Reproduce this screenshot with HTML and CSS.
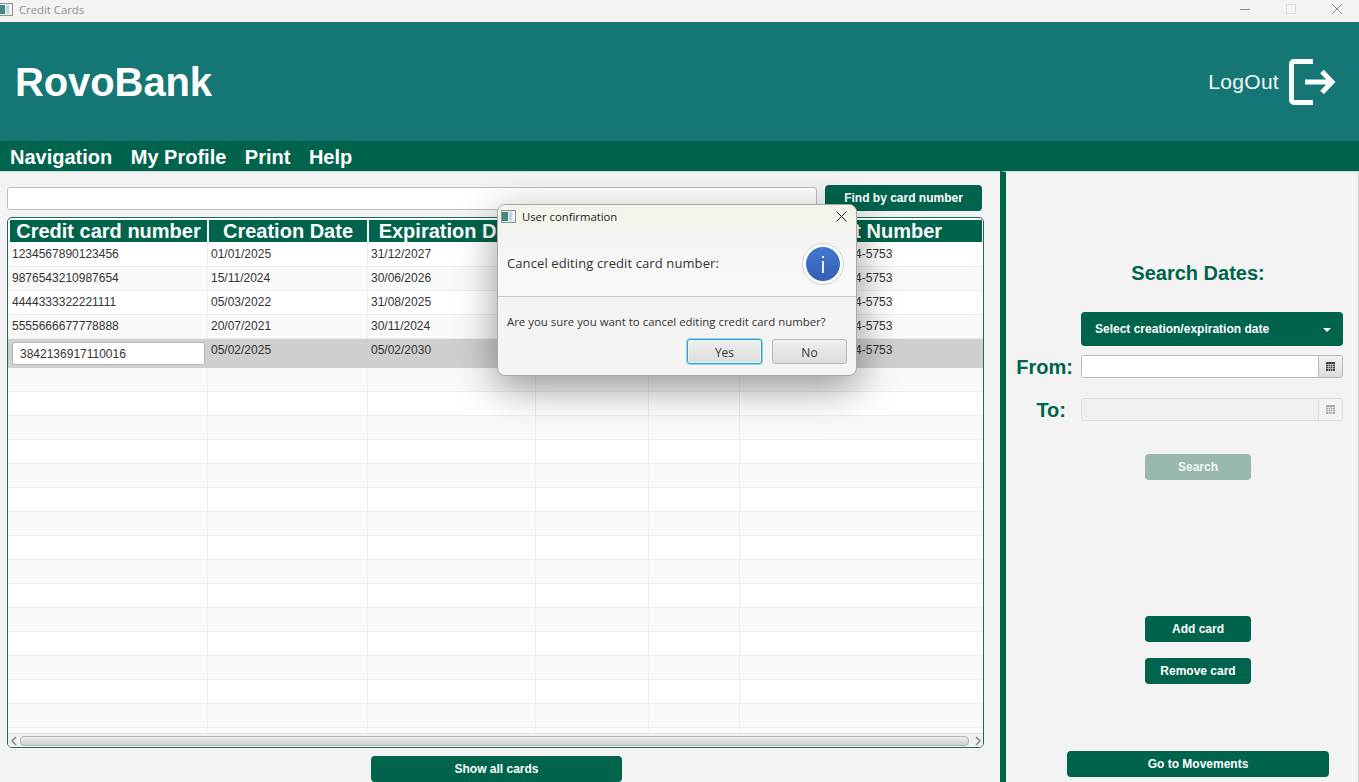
FILE: index.html
```html
<!DOCTYPE html>
<html lang="en">
<head>
<meta charset="utf-8">
<title>Credit Cards</title>
<link rel="stylesheet" href="styles.css">
</head>
<body>
<div class="app">
  <div class="titlebar">
    <div class="title-left">
      <svg class="winicon" viewBox="0 0 15 13"><rect x=".5" y=".5" width="14" height="12" fill="#e8eef0" stroke="#8a9499"/><rect x="1" y="2" width="6" height="9" fill="#3f8a80"/><rect x="8" y="2" width="3" height="9" fill="#c5d6dc"/><rect x="12" y="2" width="2" height="9" fill="#f4f4f4"/></svg>
      <span>Credit Cards</span>
    </div>
    <div class="win-controls">
      <svg viewBox="0 0 12 12"><path d="M1 6.500h10" stroke="#8c8c8c" fill="none"/></svg>
      <svg viewBox="0 0 12 12"><rect x="1.500" y="1.500" width="9" height="9" stroke="#dedede" fill="none"/></svg>
      <svg viewBox="0 0 12 12"><path d="M1 1l10 10M11 1L1 11" stroke="#8c8c8c" fill="none"/></svg>
    </div>
  </div>
  <header class="banner">
    <div class="brand">RovoBank</div>
    <div class="logout">
      <span>LogOut</span>
      <svg class="logout-icon" viewBox="0 0 48 46" width="48" height="46"><path d="M24 2.500H5a2.500 2.500 0 0 0-2.500 2.500v36a2.500 2.500 0 0 0 2.500 2.500h19" fill="none" stroke="#fff" stroke-width="5"/><path d="M16 23h27M33 12.500L43 23 33 33.500" fill="none" stroke="#fff" stroke-width="5"/></svg>
    </div>
  </header>
  <nav class="menubar">
    <span>Navigation</span><span>My Profile</span><span>Print</span><span>Help</span>
  </nav>
  <main class="main">
    <section class="left">
      <div class="search-row">
        <input class="search-input" type="text" aria-label="Card number">
        <button class="btn find-btn">Find by card number</button>
      </div>
      <div class="table">
        <div class="thead">
          <div>Credit card number</div><div>Creation Date</div><div>Expiration Date</div><div></div><div></div><div>Account Number</div>
        </div>
        <div class="tbody">
          <div class="row"><div>1234567890123456</div><div>01/01/2025</div><div>31/12/2027</div><div></div><div></div><div>1234-5678-9012-3344-5753</div></div>
          <div class="row"><div>9876543210987654</div><div>15/11/2024</div><div>30/06/2026</div><div></div><div></div><div>1234-5678-9012-3344-5753</div></div>
          <div class="row"><div>4444333322221111</div><div>05/03/2022</div><div>31/08/2025</div><div></div><div></div><div>1234-5678-9012-3344-5753</div></div>
          <div class="row"><div>5555666677778888</div><div>20/07/2021</div><div>30/11/2024</div><div></div><div></div><div>1234-5678-9012-3344-5753</div></div>
          <div class="row selected"><div class="edit-cell"><input class="cell-input" type="text" value="3842136917110016" aria-label="Credit card number"></div><div>05/02/2025</div><div>05/02/2030</div><div></div><div></div><div>1234-5678-9012-3344-5753</div></div>
          <div class="row"><div></div><div></div><div></div><div></div><div></div><div></div></div>
          <div class="row"><div></div><div></div><div></div><div></div><div></div><div></div></div>
          <div class="row"><div></div><div></div><div></div><div></div><div></div><div></div></div>
          <div class="row"><div></div><div></div><div></div><div></div><div></div><div></div></div>
          <div class="row"><div></div><div></div><div></div><div></div><div></div><div></div></div>
          <div class="row"><div></div><div></div><div></div><div></div><div></div><div></div></div>
          <div class="row"><div></div><div></div><div></div><div></div><div></div><div></div></div>
          <div class="row"><div></div><div></div><div></div><div></div><div></div><div></div></div>
          <div class="row"><div></div><div></div><div></div><div></div><div></div><div></div></div>
          <div class="row"><div></div><div></div><div></div><div></div><div></div><div></div></div>
          <div class="row"><div></div><div></div><div></div><div></div><div></div><div></div></div>
          <div class="row"><div></div><div></div><div></div><div></div><div></div><div></div></div>
          <div class="row"><div></div><div></div><div></div><div></div><div></div><div></div></div>
          <div class="row"><div></div><div></div><div></div><div></div><div></div><div></div></div>
          <div class="row"><div></div><div></div><div></div><div></div><div></div><div></div></div>
          <div class="row"><div></div><div></div><div></div><div></div><div></div><div></div></div>
        </div>
        <div class="hscroll">
          <svg viewBox="0 0 8 10" width="8" height="10"><path d="M6 1L2 5l4 4" fill="none" stroke="#8a8a8a" stroke-width="1.500"/></svg>
          <div class="thumb"></div>
          <svg class="arrow-right" viewBox="0 0 8 10" width="8" height="10"><path d="M2 1l4 4-4 4" fill="none" stroke="#8a8a8a" stroke-width="1.500"/></svg>
        </div>
      </div>
      <div class="bottom-row"><button class="btn show-btn">Show all cards</button></div>
    </section>
    <aside class="right">
      <h2 class="dates-title">Search Dates:</h2>
      <div class="select-btn"><span>Select creation/expiration date</span><i class="caret"></i></div>
      <div class="date-row">
        <label class="date-label">From:</label>
        <div class="picker">
          <input type="text" aria-label="From">
          <div class="pick-btn"><svg viewBox="0 0 9 9" width="9" height="9"><path d="M0 0h9v9H0z" fill="#444"/><path d="M0 2.500h9M0 4.500h9M0 6.500h9M2.500 2v7M4.500 2v7M6.500 2v7" stroke="#ddd" stroke-width=".6"/></svg></div>
        </div>
      </div>
      <div class="date-row to-row">
        <label class="date-label to-label">To:</label>
        <div class="picker disabled">
          <input type="text" disabled aria-label="To">
          <div class="pick-btn"><svg viewBox="0 0 9 9" width="9" height="9"><path d="M0 0h9v9H0z" fill="#aaa"/><path d="M0 2.500h9M0 4.500h9M0 6.500h9M2.500 2v7M4.500 2v7M6.500 2v7" stroke="#eee" stroke-width=".6"/></svg></div>
        </div>
      </div>
      <button class="btn action search-btn">Search</button>
      <button class="btn action add-btn">Add card</button>
      <button class="btn action remove-btn">Remove card</button>
      <button class="btn movements-btn">Go to Movements</button>
    </aside>
  </main>
</div>

<div class="dialog" role="dialog">
  <div class="dlg-title">
    <svg class="winicon" viewBox="0 0 15 13"><rect x=".5" y=".5" width="14" height="12" fill="#e8eef0" stroke="#8a9499"/><rect x="1" y="2" width="6" height="9" fill="#3f8a80"/><rect x="8" y="2" width="3" height="9" fill="#c5d6dc"/><rect x="12" y="2" width="2" height="9" fill="#f4f4f4"/></svg>
    <span>User confirmation</span>
    <svg class="dlg-close" viewBox="0 0 11 11" width="11" height="11"><path d="M.5.5l10 10M10.500.5l-10 10" stroke="#222" fill="none"/></svg>
  </div>
  <div class="dlg-head">
    <span>Cancel editing credit card number:</span>
    <svg class="info" viewBox="0 0 42 42" width="42" height="42">
      <defs><linearGradient id="blue" x1="0" y1="0" x2="0" y2="1"><stop offset="0" stop-color="#3f78d0"/><stop offset="1" stop-color="#3560b4"/></linearGradient></defs>
      <circle cx="21" cy="21" r="20.500" fill="#fff" stroke="#d0d0d0"/>
      <circle cx="21" cy="21" r="17" fill="url(#blue)"/>
      <rect x="20" y="18" width="2" height="12" fill="#e8f0fc"/>
      <rect x="20" y="13" width="2" height="2" fill="#e8f0fc"/>
    </svg>
  </div>
  <div class="dlg-body">
    <p>Are you sure you want to cancel editing credit card number?</p>
    <div class="dlg-buttons">
      <button class="dlg-btn default">Yes</button>
      <button class="dlg-btn">No</button>
    </div>
  </div>
</div>
</body>
</html>
```
FILE: styles.css
```css
* { box-sizing: border-box; }
html, body { margin: 0; padding: 0; height: 782px; overflow: hidden; background: #f3f3f3; }
body { font-family: "Liberation Sans", Arial, sans-serif; position: relative; }
.app { display: flex; flex-direction: column; height: 782px; }

.titlebar { height: 22px; flex: none; display: flex; justify-content: space-between; align-items: center; background: #f3f3f3; padding-bottom: 4px; }
.title-left { display: flex; align-items: center; gap: 6px; margin-left: -2px; font: 11.300px "Open Sans", sans-serif; color: #8f8f8f; }
.winicon { width: 15px; height: 13px; flex: none; }
.win-controls { display: flex; gap: 34px; margin-right: 16px; }
.win-controls svg { width: 12px; height: 12px; }

.banner { height: 119px; flex: none; background: #157676; color: #fff; display: flex; justify-content: space-between; align-items: center; padding: 0 22px 0 15px; }
.brand { font-weight: 700; font-size: 40px; margin-top: 2px; letter-spacing: -.1px; }
.logout { display: flex; align-items: center; gap: 10px; font-size: 21px; color: #f2f7f7; letter-spacing: .3px; }
.logout-icon { display: block; }

.menubar { height: 30px; flex: none; background: #00634c; color: #fff; font-weight: 700; font-size: 20px; display: flex; align-items: center; gap: 18.500px; padding: 2px 0 0 10px; }

.main { flex: 1; min-height: 0; display: flex; }
.left { width: 1000px; flex: none; padding: 14px 0 0 7px; display: flex; flex-direction: column; box-shadow: inset 0 1px #cfd8d5; }
.search-row { display: flex; align-items: center; gap: 8px; width: 975px; height: 26px; }
.search-input { width: 810px; height: 23px; border: 1px solid #bdbdbd; border-radius: 3px; background: #fff; padding: 0 6px; }
.btn { border: 0; background: #00634c; color: #fff; font: 700 12px "Liberation Sans", Arial, sans-serif; border-radius: 4px; padding: 0; display: block; }
.find-btn { width: 157px; height: 26px; }

.table { margin: 6px 0 0 0; width: 977px; height: 531px; border: 1px solid #1a6b58; border-radius: 5px; background: #fff; padding: 2px 0 0 0; display: flex; flex-direction: column; overflow: hidden; }
.thead { display: grid; grid-template-columns: 200px 160px 168px 113px 91px 1fr; height: 23px; flex: none; background: #fff; }
.thead > div { height: 22px; background: #00634c; color: #fff; font-weight: 700; font-size: 20px; line-height: 23px; text-align: center; margin: 0 1px; white-space: nowrap; overflow: hidden; }
.thead > div:first-child { margin-left: 2px; }
.tbody { flex: 1; min-height: 0; overflow: hidden; }
.row { display: grid; grid-template-columns: 200px 160px 168px 113px 91px 1fr; height: 24px; background: #fff; border-bottom: 1px solid #ededed; }
.row:nth-child(even) { background: #f9f9f9; }
.row > div { border-right: 1px solid #ededed; font-size: 12px; line-height: 23px; color: #333; padding-left: 3px; white-space: nowrap; overflow: hidden; }
.row > div:first-child { padding-left: 4px; }
.row > div:last-child { border-right: 0; }
.row.selected { height: 29px; background: #cfcfcf; border-bottom: 0; }
.row.selected > div { border-right: 0; }
.row > .edit-cell { padding: 3px 0 0 4px; }
.cell-input { display: block; width: 193px; height: 23px; border: 1px solid #b5b5b5; border-radius: 3px; background: #fff; font: 12px "Liberation Sans", Arial, sans-serif; color: #333; padding: 0 7px; }

.hscroll { height: 14px; flex: none; background: #f0f0f0; border-top: 1px solid #e2e2e2; display: flex; align-items: center; gap: 2px; padding: 0 1px 0 2px; }
.hscroll svg { flex: none; }
.hscroll .arrow-right { margin-left: 3px; }
.thumb { flex: 1; height: 10px; border: 1px solid #b5b5b5; border-radius: 4px; background: linear-gradient(#ececec, #d0d0d0); }

.bottom-row { margin-top: 8px; padding-left: 364px; }
.show-btn { width: 251px; height: 26px; }

.right { flex: 1; border-left: 6px solid #00634c; border-right: 1px solid #c9d0ce; border-top: 1px solid #cfd8d5; position: relative; display: flex; flex-direction: column; align-items: flex-start; }
.dates-title { margin: 90px 0 0 0; width: 100%; padding-left: 32px; font-size: 20px; line-height: 23px; text-align: center; color: #00634c; font-weight: 700; }
.select-btn { margin: 27px 0 0 75px; width: 262px; height: 34px; background: #00634c; color: #fff; font-weight: 700; font-size: 12px; border-radius: 4px; display: flex; align-items: center; justify-content: space-between; padding: 0 12px 0 14px; }
.caret { width: 0; height: 0; border: 4px solid transparent; border-top: 4px solid #fff; border-bottom: 0; margin-top: 1px; }
.date-row { display: flex; align-items: center; margin: 9px 0 0 0; width: 337px; height: 23px; justify-content: flex-end; gap: 8px; }
.to-row { margin-top: 20px; }
.date-label { font-size: 20px; font-weight: 700; color: #00634c; margin-top: 2px; }
.to-label { margin-right: 7px; }
.picker { display: flex; width: 262px; height: 23px; border: 1px solid #b9b9b9; border-radius: 3px; overflow: hidden; flex: none; }
.picker input { flex: 1; min-width: 0; border: 0; background: #fff; padding: 0 6px; height: 100%; }
.pick-btn { width: 24px; border-left: 1px solid #b9b9b9; background: linear-gradient(#f2f2f2, #dcdcdc); display: flex; align-items: center; justify-content: center; }
.pick-btn svg { display: block; }
.picker.disabled { border-color: #dedede; }
.picker.disabled input { background: #f0f0f0; }
.picker.disabled .pick-btn { border-left-color: #dedede; background: #f2f2f2; }
.action { width: 106px; height: 26px; margin-left: 139px; }
.search-btn { margin-top: 33px; background: #99b9af; color: #f2f6f4; }
.add-btn { margin-top: 136px; }
.remove-btn { margin-top: 16px; }
.movements-btn { width: 262px; height: 26px; margin: 67px 0 0 61px; }

.dialog { position: absolute; left: 497px; top: 204px; width: 360px; height: 172px; border-radius: 8px; background: #f4f4f4; border: 1px solid #a8a8a8; box-shadow: 0 12px 40px rgba(0,0,0,.4); overflow: hidden; font-family: "Open Sans", sans-serif; color: #333; }
.dlg-title { height: 24px; background: linear-gradient(#f2f3ea, #f3f4ee); display: flex; align-items: center; gap: 6px; padding: 0 9px 2px 3px; font-size: 11.300px; color: #222; }
.dlg-title span { flex: 1; }
.dlg-head { height: 68px; padding: 0 12px 0 9px; display: flex; align-items: center; justify-content: space-between; font-size: 13px; background: linear-gradient(#f3f3f3, #fafafa); border-bottom: 1px solid #c8c8c8; letter-spacing: .1px; }
.info { display: block; margin-top: 3px; }
.dlg-body { padding: 0 9px; }
.dlg-body p { margin: 16px 0 0 0; font-size: 11.400px; line-height: 17px; white-space: nowrap; }
.dlg-buttons { display: flex; justify-content: flex-end; gap: 10px; margin-top: 9px; }
.dlg-btn { width: 75px; height: 25px; border: 1px solid #b9b9b9; border-radius: 3px; background: linear-gradient(#f0f0f0, #dcdcdc); font: 12px "Open Sans", sans-serif; color: #333; padding: 1px 0 0 0; }
.dlg-btn.default { border: 1px solid #29a3d6; box-shadow: 0 0 0 1px rgba(41,163,214,.45), inset 0 0 0 1px #e8f4fa; }
```
